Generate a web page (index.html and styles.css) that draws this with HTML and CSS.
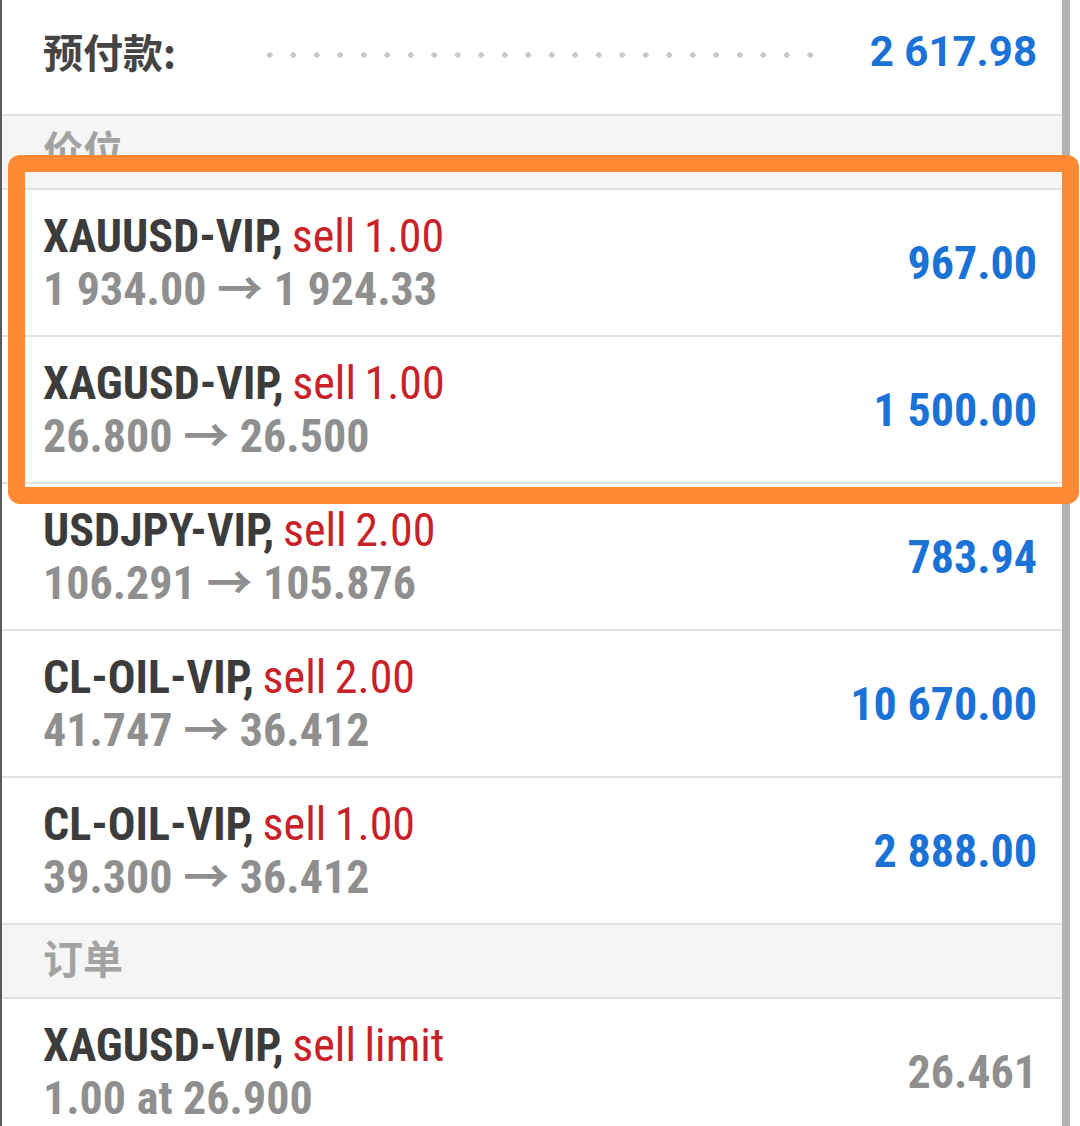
FILE: index.html
```html
<!DOCTYPE html>
<html lang="zh">
<head>
    <meta charset="UTF-8">
    <meta name="viewport" content="width=device-width, initial-scale=1.0">
    <title>交易</title>
    <link rel="stylesheet" href="styles.css">
</head>
<body>
    <div class="screen">
        <div class="panel">
            <div class="summary-row">
                <span class="summary-label">预付款:</span>
                <span class="leader"></span>
                <span class="summary-value">2 617.98</span>
            </div>

            <div class="section-head">价位</div>

            <div class="trade">
                <div class="trade-info">
                    <div class="trade-title">XAUUSD-VIP, <span class="trade-type">sell 1.00</span></div>
                    <div class="trade-prices">1 934.00 → 1 924.33</div>
                </div>
                <div class="trade-profit">967.00</div>
            </div>
            <div class="trade">
                <div class="trade-info">
                    <div class="trade-title">XAGUSD-VIP, <span class="trade-type">sell 1.00</span></div>
                    <div class="trade-prices">26.800 → 26.500</div>
                </div>
                <div class="trade-profit">1 500.00</div>
            </div>
            <div class="trade">
                <div class="trade-info">
                    <div class="trade-title">USDJPY-VIP, <span class="trade-type">sell 2.00</span></div>
                    <div class="trade-prices">106.291 → 105.876</div>
                </div>
                <div class="trade-profit">783.94</div>
            </div>
            <div class="trade">
                <div class="trade-info">
                    <div class="trade-title">CL-OIL-VIP, <span class="trade-type">sell 2.00</span></div>
                    <div class="trade-prices">41.747 → 36.412</div>
                </div>
                <div class="trade-profit">10 670.00</div>
            </div>
            <div class="trade">
                <div class="trade-info">
                    <div class="trade-title">CL-OIL-VIP, <span class="trade-type">sell 1.00</span></div>
                    <div class="trade-prices">39.300 → 36.412</div>
                </div>
                <div class="trade-profit">2 888.00</div>
            </div>

            <div class="section-head">订单</div>

            <div class="trade">
                <div class="trade-info">
                    <div class="trade-title">XAGUSD-VIP, <span class="trade-type">sell limit</span></div>
                    <div class="trade-prices">1.00 at 26.900</div>
                </div>
                <div class="trade-profit pending">26.461</div>
            </div>
        </div>
        <div class="scrollbar"></div>

        <div class="highlight"></div>
    </div>
</body>
</html>
```

FILE: styles.css
```css
body {
    margin: 0;
    background-color: #fff;
    font-family: "Roboto Condensed", "Liberation Sans Narrow", Roboto, "Noto Sans CJK SC", sans-serif;
}
.screen {
    position: relative;
    display: flex;
    width: 1080px;
    height: 1126px;
    overflow: hidden;
    padding-right: 10px;
    box-sizing: border-box;
}
.panel {
    flex: 1;
    border-left: 2px solid #5a5a5a;
    background-color: #fff;
}
.scrollbar {
    width: 8px;
    background-color: #b3b3b3;
}
.summary-row {
    display: flex;
    align-items: center;
    height: 116px;
    padding: 0 25px 12px 41px;
    box-sizing: border-box;
    border-bottom: 2px solid #e2e2e2;
}
.summary-label {
    font-family: "Noto Sans CJK SC", sans-serif;
    font-size: 40px;
    font-weight: bold;
    color: #444;
}
.leader {
    flex: 1;
    height: 6px;
    margin: 8px 14px 0 82px;
    background-image: radial-gradient(circle, #c9c9c9 2.5px, transparent 3px);
    background-size: 23.5px 6px;
}
.summary-value {
    font-family: Roboto, sans-serif;
    font-size: 42px;
    font-weight: bold;
    color: #1a72d6;
    margin-left: 30px;
}
.section-head {
    height: 74px;
    padding: 0 41px 8px;
    box-sizing: border-box;
    display: flex;
    align-items: center;
    background-color: #f5f5f5;
    border-bottom: 2px solid #e2e2e2;
    font-family: "Noto Sans CJK SC", sans-serif;
    font-size: 40px;
    font-weight: bold;
    color: #a2a2a2;
}
.trade {
    display: flex;
    align-items: center;
    justify-content: space-between;
    height: 147px;
    padding: 0 25px 0 41px;
    box-sizing: border-box;
    border-bottom: 2px solid #e2e2e2;
}
.trade-info {
    font-size: 46px;
    line-height: 53px;
}
.trade-title {
    font-weight: bold;
    color: #3c3c3c;
    word-spacing: -2px;
}
.trade-type {
    font-weight: normal;
    color: #c92128;
}
.trade-prices {
    font-weight: bold;
    color: #8f8f8f;
}
.trade-profit {
    font-size: 46px;
    font-weight: bold;
    color: #1a72d6;
}
.trade-profit.pending {
    color: #8f8f8f;
}
.highlight {
    position: absolute;
    left: 8px;
    top: 155px;
    width: 1071px;
    height: 349px;
    border: 17px solid #ff8a33;
    border-radius: 12px;
    box-sizing: border-box;
}
```
